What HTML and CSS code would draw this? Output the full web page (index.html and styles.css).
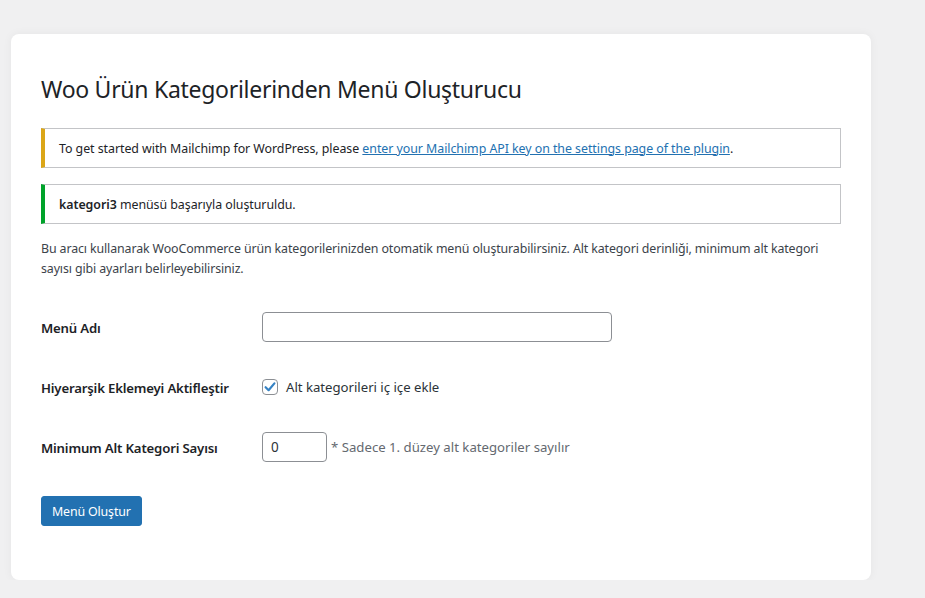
FILE: index.html
```html
<!DOCTYPE html>
<html lang="tr">
<head>
<meta charset="utf-8">
<title>Woo Ürün Kategorilerinden Menü Oluşturucu</title>
<link rel="stylesheet" href="styles.css">
</head>
<body>
<div class="wrap">
  <div class="card">
    <h1 class="title">Woo Ürün Kategorilerinden Menü Oluşturucu</h1>
    <div class="notice notice-warning">
      <p>To get started with Mailchimp for WordPress, please <a href="#">enter your Mailchimp API key on the settings page of the plugin</a>.</p>
    </div>
    <div class="notice notice-success">
      <p><strong>kategori3</strong> menüsü başarıyla oluşturuldu.</p>
    </div>
    <p class="intro">Bu aracı kullanarak WooCommerce ürün kategorilerinizden otomatik menü oluşturabilirsiniz. Alt kategori derinliği, minimum alt kategori sayısı gibi ayarları belirleyebilirsiniz.</p>
    <form class="form-table">
      <label class="th" for="menu-name">Menü Adı</label>
      <div class="td"><input id="menu-name" class="text-input" type="text"></div>
      <div class="th">Hiyerarşik Eklemeyi Aktifleştir</div>
      <div class="td">
        <label class="check">
          <span class="box"><svg viewBox="0 0 16 16" width="16" height="16"><path d="M3.6 8.2 L6.6 11.2 L12.4 4.4" fill="none" stroke="#3582c4" stroke-width="2.2" stroke-linecap="round" stroke-linejoin="round"/></svg></span>
          Alt kategorileri iç içe ekle
        </label>
      </div>
      <label class="th" for="min-sub">Minimum Alt Kategori Sayısı</label>
      <div class="td"><input id="min-sub" class="num-input" type="text" value="0"><span class="desc">* Sadece 1. düzey alt kategoriler sayılır</span></div>
    </form>
    <button class="button-primary" type="button">Menü Oluştur</button>
  </div>
</div>
</body>
</html>
```

FILE: styles.css
```css
html, body {
  margin: 0;
  padding: 0;
  background: #f0f0f1;
  font-family: "Noto Sans", "Open Sans", sans-serif;
  color: #1d2327;
  font-size: 13px;
}
.wrap {
  padding: 34px 0 0 11px;
}
.card {
  width: 860px;
  height: 546px;
  box-sizing: border-box;
  background: #fff;
  border-radius: 8px;
  box-shadow: 0 0 10px rgba(0,0,0,0.05);
  padding: 40px 30px 0 30px;
}
.title {
  margin: 0 0 24px;
  font-size: 23px;
  font-weight: 400;
  line-height: 30px;
  color: #1d2327;
  letter-spacing: -0.28px;
}
.notice {
  border: 1px solid #c3c4c7;
  border-left-width: 4px;
  height: 40px;
  box-sizing: border-box;
  display: flex;
  align-items: center;
  padding: 0 14px;
  margin-bottom: 16px;
}
.notice p {
  margin: 0;
  font-size: 12.4px;
  letter-spacing: -0.05px;
}
.notice-warning { border-left-color: #dba617; }
.notice-success { border-left-color: #00a32a; margin-bottom: 15px; }
.notice a { color: #2271b1; text-decoration: underline; }
.notice strong { font-weight: 600; }
.intro {
  margin: 0 0 18px;
  font-size: 12.4px;
  letter-spacing: -0.12px;
  line-height: 20px;
  color: #3c434a;
}
.form-table {
  display: grid;
  grid-template-columns: 221px 1fr;
  grid-auto-rows: 60px;
  align-items: center;
  margin: 0 0 19px;
}
.th {
  font-weight: 600;
  font-size: 13.2px;
  letter-spacing: -0.18px;
  color: #1d2327;
  padding-top: 1px;
}
.td {
  display: flex;
  align-items: center;
}
.text-input, .num-input {
  height: 30px;
  box-sizing: border-box;
  border: 1px solid #8c8f94;
  border-radius: 4px;
  padding: 0 8px;
  font-family: inherit;
  font-size: 13.5px;
  color: #2c3338;
  background: #fff;
}
.text-input { width: 350px; }
.num-input { width: 65px; }
.desc {
  margin-left: 4px;
  color: #646970;
  font-size: 13.2px;
  letter-spacing: 0px;
}
.check {
  display: flex;
  align-items: center;
  gap: 8px;
  font-size: 13.2px;
  letter-spacing: -0.02px;
  color: #2c3338;
}
.box {
  width: 16px;
  height: 16px;
  box-sizing: border-box;
  border: 1px solid #8c8f94;
  border-radius: 4px;
  display: flex;
  align-items: center;
  justify-content: center;
  position: relative;
}
.box svg { position: absolute; left: -1px; top: -1px; }
.button-primary {
  height: 30px;
  padding: 0 10px;
  background: #2271b1;
  border: 1px solid #2271b1;
  border-radius: 3px;
  color: #fff;
  font-family: inherit;
  font-size: 12.4px;
  letter-spacing: -0.15px;
}
```
